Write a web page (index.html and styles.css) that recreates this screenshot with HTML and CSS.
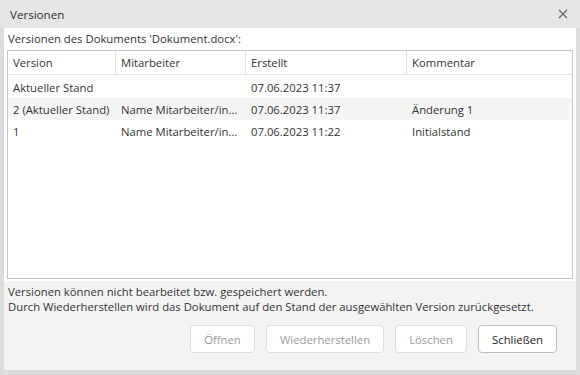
FILE: index.html
```html
<!DOCTYPE html>
<html lang="de">
<head>
<meta charset="utf-8">
<title>Versionen</title>
<link rel="stylesheet" href="styles.css">
</head>
<body>
<div class="dialog">
  <div class="titlebar">
    <span class="title">Versionen</span>
    <span class="close" aria-label="Schließen">
      <svg width="10" height="10" viewBox="0 0 10 10"><path d="M1 1 L9 9 M9 1 L1 9" stroke="#6a6a6a" stroke-width="1.4" fill="none"/></svg>
    </span>
  </div>
  <div class="upper">
    <div class="label">Versionen des Dokuments 'Dokument.docx':</div>
    <div class="table">
      <div class="row head">
        <div class="cell">Version</div>
        <div class="cell">Mitarbeiter</div>
        <div class="cell">Erstellt</div>
        <div class="cell">Kommentar</div>
      </div>
      <div class="row">
        <div class="cell">Aktueller Stand</div>
        <div class="cell"></div>
        <div class="cell">07.06.2023 11:37</div>
        <div class="cell"></div>
      </div>
      <div class="row alt">
        <div class="cell">2 (Aktueller Stand)</div>
        <div class="cell" title="Name Mitarbeiter/innen">Name Mitarbeiter/in…</div>
        <div class="cell">07.06.2023 11:37</div>
        <div class="cell">Änderung 1</div>
      </div>
      <div class="row">
        <div class="cell">1</div>
        <div class="cell" title="Name Mitarbeiter/innen">Name Mitarbeiter/in…</div>
        <div class="cell">07.06.2023 11:22</div>
        <div class="cell">Initialstand</div>
      </div>
    </div>
  </div>
  <div class="lower">
    <p class="info">Versionen können nicht bearbeitet bzw. gespeichert werden.<br>Durch Wiederherstellen wird das Dokument auf den Stand der ausgewählten Version zurückgesetzt.</p>
    <div class="buttons">
      <button class="btn b-open" disabled>Öffnen</button>
      <button class="btn b-restore" disabled>Wiederherstellen</button>
      <button class="btn b-delete" disabled>Löschen</button>
      <button class="btn b-close primary">Schließen</button>
    </div>
  </div>
</div>
</body>
</html>
```

FILE: styles.css
```css
* { box-sizing: border-box; }
html, body { margin: 0; padding: 0; }
body {
  width: 580px;
  height: 375px;
  font-family: "Open Sans", "Noto Sans", sans-serif;
  font-size: 11.3px;
  color: #333;
  background: #dcdcdc;
}
.dialog {
  width: 580px;
  height: 375px;
  border-left: 4px solid #dcdcdc;
  border-right: 4px solid #dcdcdc;
  border-bottom: 5px solid #dcdcdc;
  display: flex;
  flex-direction: column;
  background: #f3f3f3;
}
.titlebar {
  height: 28px;
  background: #e6e6e6;
  display: flex;
  align-items: center;
  justify-content: space-between;
  margin: 0 -4px;
  padding: 0 12px 0 10px;
}
.title { font-size: 11.6px; color: #2e2e2e; }
.close { display: flex; align-items: center; }
.upper {
  background: #fff;
  padding: 0 3px 2px;
}
.label {
  height: 22px;
  line-height: 22px;
  padding-left: 1px;
}
.table {
  height: 229px;
  border: 1px solid #c9c9c9;
}
.row {
  display: grid;
  grid-template-columns: 108px 130px 161px 1fr;
  height: 22px;
  align-items: center;
}
.row.head {
  height: 24px;
  border-bottom: 1px solid #e3e3e3;
  margin-bottom: 1px;
}
.row.head .cell { border-right: 1px solid #e3e3e3; height: 100%; line-height: 23px; }
.row.head .cell:last-child { border-right: none; }
.row.alt { background: #f5f5f5; }
.cell {
  padding: 0 5px;
  white-space: nowrap;
  overflow: hidden;
  text-overflow: ellipsis;
}
.lower {
  flex: 1;
  padding: 3px 4px 0;
  display: flex;
  flex-direction: column;
}
.info {
  margin: 0;
  line-height: 15px;
}
.buttons {
  display: flex;
  justify-content: flex-end;
  gap: 11px;
  margin-top: 11px;
  padding-right: 15px;
}
.btn {
  font-family: inherit;
  font-size: 11.3px;
  height: 28px;
  padding: 0;
  background: #fff;
  border: 1px solid #dedede;
  border-radius: 4px;
  color: #9a9a9a;
}
.b-open { width: 65px; }
.b-restore { width: 118px; }
.b-delete { width: 72px; }
.b-close { width: 79px; }
.btn.primary {
  border-color: #bdbdbd;
  color: #222;
}
```
